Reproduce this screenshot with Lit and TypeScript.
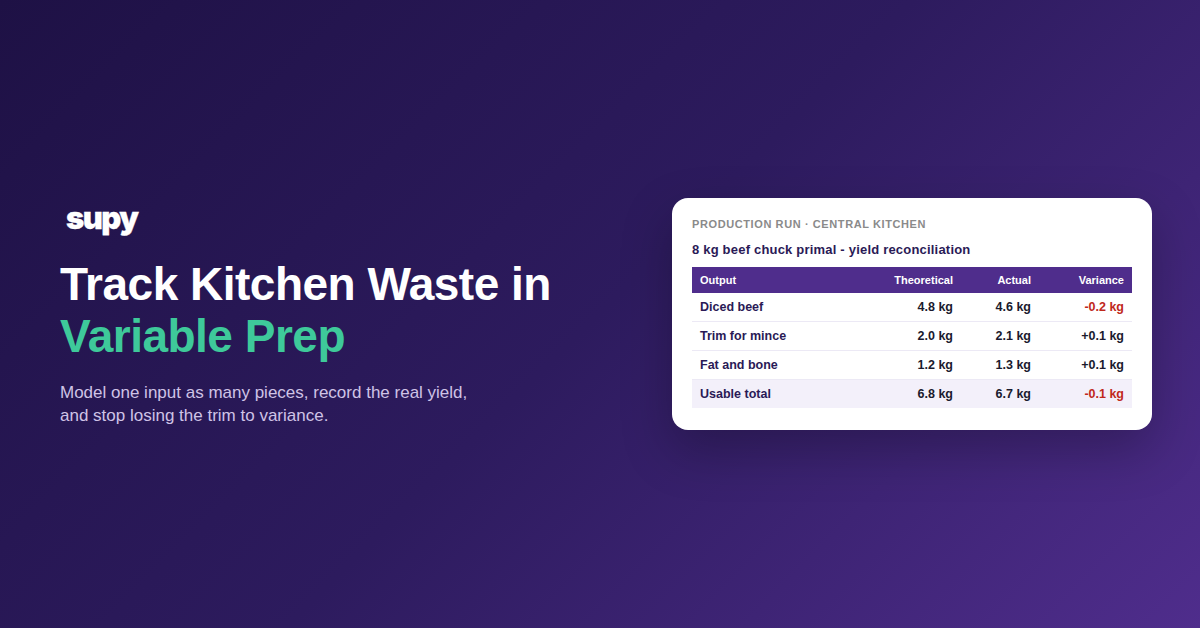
import { LitElement, html, css } from "lit";

const rows = [
  ["Diced beef", "4.8 kg", "4.6 kg", "-0.2 kg", true],
  ["Trim for mince", "2.0 kg", "2.1 kg", "+0.1 kg", false],
  ["Fat and bone", "1.2 kg", "1.3 kg", "+0.1 kg", false],
] as const;

class AppRoot extends LitElement {
  static styles = css`
    :host {
      display: flex;
      width: 1200px;
      height: 628px;
      box-sizing: border-box;
      padding: 0 48px 0 60px;
      align-items: center;
      justify-content: space-between;
      background: linear-gradient(135deg, #1e1145 0%, #2d1b5e 50%, #4f2d8c 100%);
      font-family: "Liberation Sans", Arial, sans-serif;
      overflow: hidden;
    }
    .left { display: flex; flex-direction: column; width: 560px; }
    .logo {
      font-family: Inter, sans-serif;
      font-weight: 900;
      font-size: 31px;
      line-height: 36px;
      letter-spacing: -1.5px;
      color: #fff;
      margin: -1px 0 22px 6px;
      -webkit-text-stroke: 0.3px #fff;
    }
    h1 {
      margin: 0 0 19px;
      font-size: 46px;
      line-height: 52px;
      font-weight: 700;
      letter-spacing: -0.5px;
      color: #fff;
    }
    h1 span { color: #3ec99a; display: block; }
    .sub {
      margin: 0;
      font-size: 17px;
      line-height: 23px;
      color: #cfc3e6;
    }
    .card {
      width: 480px;
      box-sizing: border-box;
      padding: 20px 20px 22px;
      background: #fff;
      border-radius: 16px;
      box-shadow: 0 20px 50px rgba(0, 0, 0, 0.25);
    }
    .eyebrow {
      font-size: 11px;
      line-height: 13px;
      font-weight: 700;
      letter-spacing: 0.6px;
      color: #8a8a8a;
      margin-bottom: 11px;
    }
    .title {
      font-size: 13px;
      line-height: 16px;
      font-weight: 700;
      letter-spacing: 0.2px;
      color: #2a1a56;
      margin-bottom: 9px;
    }
    table {
      width: 100%;
      border-collapse: separate;
      border-spacing: 0;
      table-layout: fixed;
      font-size: 12.5px;
    }
    th {
      box-sizing: border-box;
      background: #4f2d8c;
      color: #fff;
      font-size: 11px;
      font-weight: 700;
      height: 26px;
      padding: 0 8px;
      text-align: right;
    }
    td {
      box-sizing: border-box;
      height: 29px;
      padding: 0 8px;
      text-align: right;
      font-weight: 700;
      color: #1a1a2e;
      border-bottom: 1px solid #ece9f5;
    }
    th:first-child, td:first-child { text-align: left; }
    td:first-child { color: #2a1a56; }
    .c1 { width: 160px; }
    .c2 { width: 109px; }
    .c3 { width: 78px; }
    .c4 { width: 93px; }
    td.neg { color: #c0281c; }
    tr.total td { background: #f3f0fa; border-bottom: none; height: 28px; }
  `;

  render() {
    return html`
      <div class="left">
        <div class="logo">supy</div>
        <h1>Track Kitchen Waste in<span>Variable Prep</span></h1>
        <p class="sub">Model one input as many pieces, record the real yield,<br />and stop losing the trim to variance.</p>
      </div>
      <div class="card">
        <div class="eyebrow">PRODUCTION RUN · CENTRAL KITCHEN</div>
        <div class="title">8 kg beef chuck primal - yield reconciliation</div>
        <table>
          <thead>
            <tr>
              <th class="c1">Output</th><th class="c2">Theoretical</th><th class="c3">Actual</th><th class="c4">Variance</th>
            </tr>
          </thead>
          <tbody>
            ${rows.map(
              (r) => html`<tr>
                <td>${r[0]}</td><td>${r[1]}</td><td>${r[2]}</td><td class=${r[4] ? "neg" : ""}>${r[3]}</td>
              </tr>`
            )}
            <tr class="total"><td>Usable total</td><td>6.8 kg</td><td>6.7 kg</td><td class="neg">-0.1 kg</td></tr>
          </tbody>
        </table>
      </div>
    `;
  }
}
customElements.define("app-root", AppRoot);
